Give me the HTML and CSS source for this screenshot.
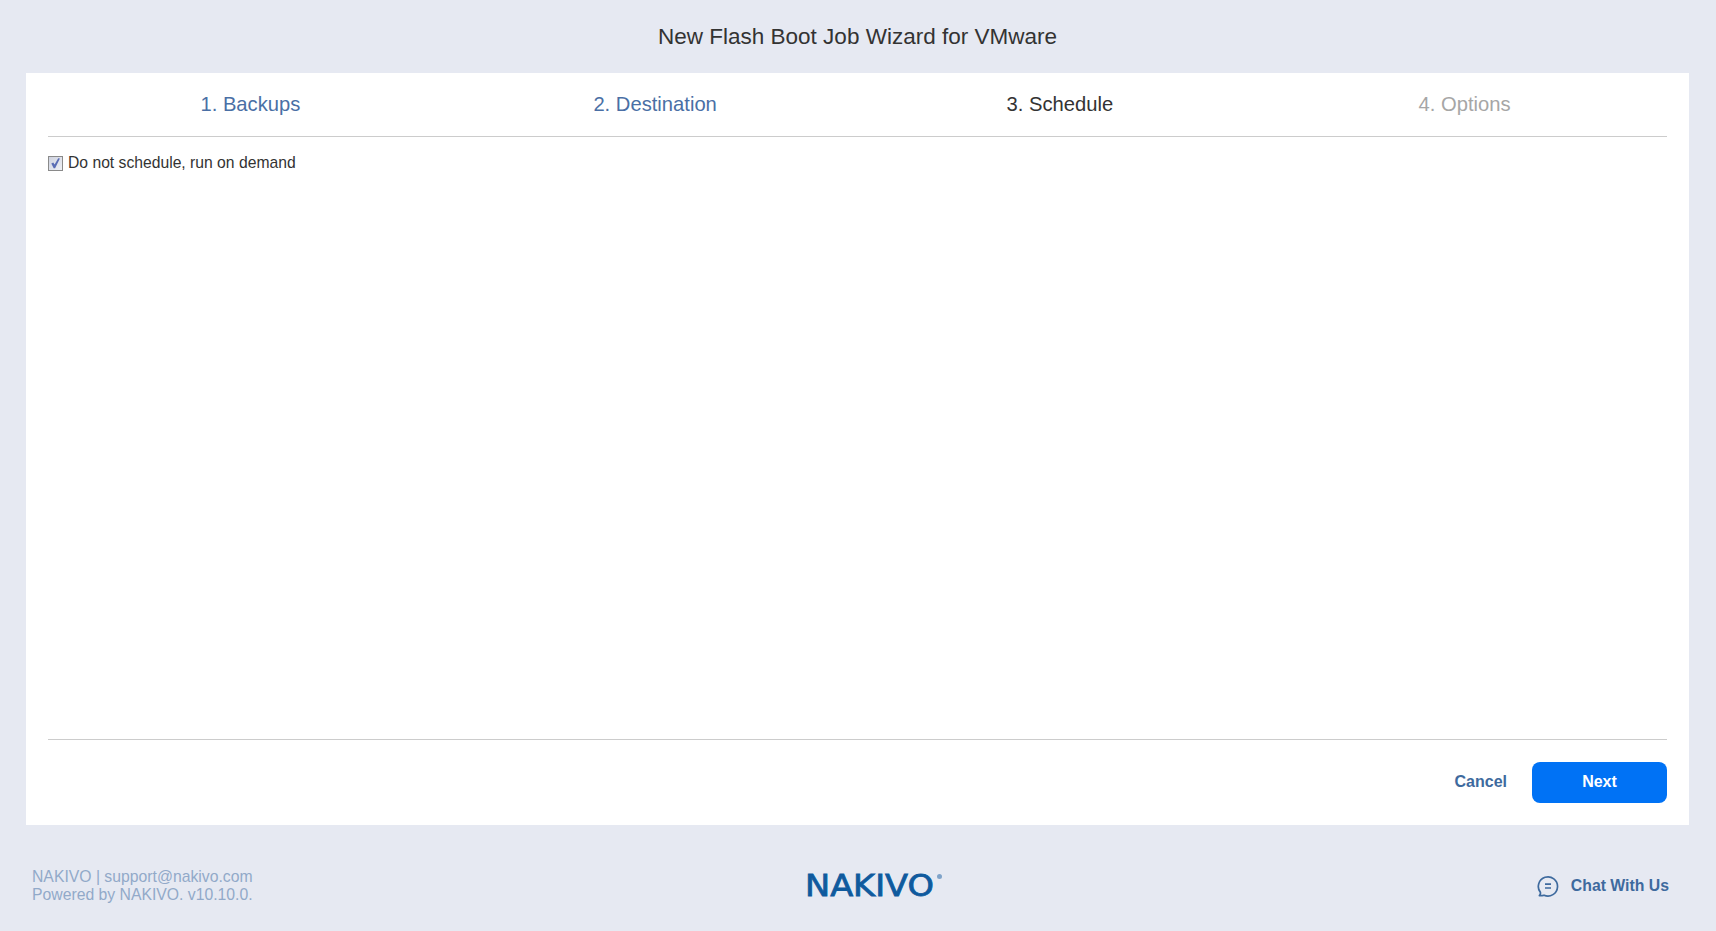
FILE: index.html
```html
<!DOCTYPE html>
<html lang="en">
<head>
  <meta charset="UTF-8">
  <title>New Flash Boot Job Wizard for VMware</title>
  <link rel="stylesheet" href="styles.css">
</head>
<body>

  <h1 class="wizard-title">New Flash Boot Job Wizard for VMware</h1>

  <main class="wizard">
    <!-- steps -->
    <nav class="steps">
      <div class="step done">1. Backups</div>
      <div class="step done">2. Destination</div>
      <div class="step current">3. Schedule</div>
      <div class="step disabled">4. Options</div>
    </nav>

    <div class="wizard-body">
      <label class="check-row">
        <input type="checkbox" class="check-input" checked>
        <span class="check-box">
          <svg viewBox="0 0 13 13" width="13" height="13"><path d="M2.300 6.600 4.300 5.400 5.600 7.400 9.200 1.200 10.900 1.600 6.100 11.200 4.700 11.200z" fill="#5a6db5"/></svg>
        </span>
        Do not schedule, run on demand
      </label>
    </div>

    <div class="wizard-actions">
      <a class="btn-cancel">Cancel</a>
      <button class="btn-next" type="button">Next</button>
    </div>
  </main>

  <footer class="page-footer">
    <div class="footer-info">
      NAKIVO | support@nakivo.com<br>
      Powered by NAKIVO. v10.10.0.
    </div>
    <div class="footer-logo">
      <span class="logo-text">NAKIVO</span>
      <span class="logo-mark"></span>
    </div>
    <a class="footer-chat">
      <svg viewBox="0 0 24 24" width="24" height="24" fill="none" stroke="#3e6a9e" stroke-width="1.7">
        <path d="M3.400 21.600c.9-1 1.300-2 1-3.200A9.600 9.600 0 1 1 8 21.200c-1.500.4-3 .6-4.600.4z" stroke-linejoin="round"/>
        <path d="M9 10.200h6M9 14h6"/>
      </svg>
      Chat With Us
    </a>
  </footer>

</body>
</html>
```

FILE: styles.css
```css
* {
  box-sizing: border-box;
}

html, body {
  height: 100%;
}

body {
  margin: 0;
  background-color: #e6e9f2;
  color: #333;
  font-family: "Liberation Sans", Arial, sans-serif;
  display: flex;
  flex-direction: column;
  padding: 0 27px 0 26px;
}

.wizard-title {
  margin: 0;
  height: 73px;
  line-height: 73px;
  font-size: 22.500px;
  font-weight: normal;
  text-align: center;
}

.wizard {
  height: 752px;
  background: white;
  padding: 0 22px;
  display: flex;
  flex-direction: column;
}

.steps {
  display: grid;
  grid-template-columns: repeat(4, 1fr);
  height: 64px;
  border-bottom: 1px solid #ccc;
}

.step {
  font-size: 20.200px;
  line-height: 62px;
  text-align: center;
}

.step.done {
  color: #4a6fa5;
}

.step.current {
  color: #333;
}

.step.disabled {
  color: #a6a6a6;
}

.wizard-body {
  flex: 1;
  padding-top: 16px;
  border-bottom: 1px solid #ccc;
}

.check-row {
  display: flex;
  align-items: center;
  gap: 5px;
  font-size: 15.700px;
  line-height: 20px;
  color: #333;
}

.check-input {
  display: none;
}

.check-box {
  width: 15px;
  height: 15px;
  border: 1px solid #8a8a8a;
  background: linear-gradient(135deg, #cfd3e0, #eef0f5);
  display: flex;
  align-items: center;
  justify-content: center;
  margin-top: 1px;
}

.wizard-actions {
  height: 85px;
  display: flex;
  align-items: center;
  justify-content: flex-end;
  gap: 25px;
  padding-bottom: 1px;
}

.btn-cancel {
  color: #3e6a9e;
  font-size: 16px;
  font-weight: bold;
}

.btn-next {
  width: 135px;
  height: 41px;
  background-color: #0072f5;
  color: white;
  border: none;
  border-radius: 8px;
  font-family: inherit;
  font-size: 16px;
  font-weight: bold;
}

.page-footer {
  flex: 1;
  display: grid;
  grid-template-columns: 1fr auto 1fr;
  align-items: center;
  padding: 15px 20px 0 6px;
}

.footer-info {
  color: #92a9c9;
  font-size: 15.750px;
  line-height: 18px;
}

.footer-logo {
  display: flex;
  width: 140px;
  margin-left: 48px;
}

.logo-text {
  width: 131px;
  font-family: "DejaVu Sans", sans-serif;
  font-size: 30px;
  line-height: 30px;
  color: #0f5a9e;
  -webkit-text-stroke: 0.8px #0f5a9e;
  transform: scaleX(1.12);
  transform-origin: left;
}

.logo-mark {
  width: 5px;
  height: 5px;
  margin: 3px 0 0 1px;
  border-radius: 50%;
  background: #7fa3c9;
}

.footer-chat {
  justify-self: end;
  display: flex;
  align-items: center;
  gap: 11px;
  color: #3e6a9e;
  font-size: 15.800px;
  font-weight: bold;
}
```
